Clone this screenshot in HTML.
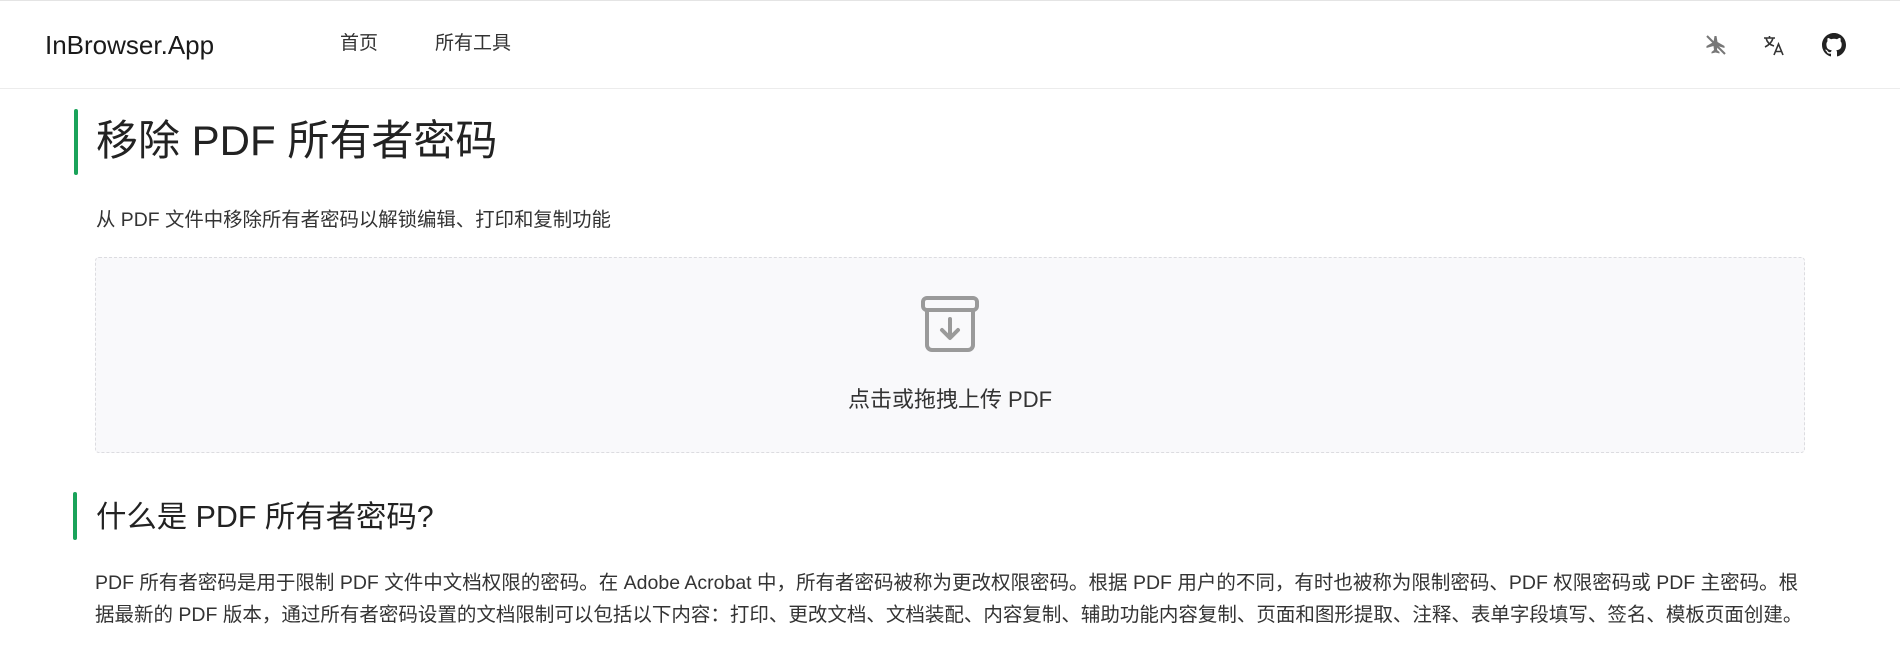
<!DOCTYPE html>
<html><head><meta charset="utf-8"><style>
*{margin:0;padding:0;box-sizing:border-box}
body{width:1900px;height:647px;overflow:hidden;background:#fff;font-family:"Liberation Sans","Noto Sans CJK SC",sans-serif;color:#222;position:relative}
.abs{position:absolute;white-space:nowrap}
</style></head><body>
<div class="abs" style="left:0;top:0;width:1900px;height:1px;background:#e4e4e4"></div>
<div class="abs" style="left:0;top:88px;width:1900px;height:1px;background:#ececec"></div>
<div class="abs" style="left:45px;top:29px;font-size:26px;line-height:32px;color:#1a1a1a">InBrowser.App</div>
<div class="abs" style="left:340px;top:31px;font-size:19px;line-height:26px;color:#333">首页</div>
<div class="abs" style="left:435px;top:31px;font-size:19px;line-height:26px;color:#333">所有工具</div>
<svg class="abs" style="left:1704px;top:33px" width="24" height="24" viewBox="0 0 24 24" fill="#777"><path d="M10.5 3h2l1 6 7 4v2l-7-2-.5 4 2.5 2v1.5l-4-1-4 1V19l2.5-2-.5-4-7 2v-2l7-4z"/><path d="M3 3l18 18" stroke="#777" stroke-width="2"/></svg>
<svg class="abs" style="left:1762px;top:33px" width="24" height="24" viewBox="0 0 24 24" fill="none" stroke="#333" stroke-width="1.6"><path d="M2 5h11M7.5 3v2M4 5c1 4 4 7 8 8M11 5c-1 4-4 7-8 9"/><path d="M12 22l4.5-11 4.5 11M13.5 18.5h6"/></svg>
<svg class="abs" style="left:1822px;top:33px" width="24" height="24" viewBox="0 0 16 16" fill="#222"><path d="M8 0C3.58 0 0 3.58 0 8c0 3.540 2.29 6.53 5.47 7.59.4.07.55-.17.55-.38 0-.19-.01-.82-.01-1.490-2.010.37-2.530-.49-2.69-.94-.09-.23-.48-.94-.82-1.13-.28-.15-.68-.52-.01-.53.63-.01 1.080.58 1.230.82.72 1.210 1.870.87 2.330.66.07-.52.28-.87.51-1.070-1.780-.2-3.640-.89-3.640-3.950 0-.87.31-1.590.82-2.150-.08-.2-.36-1.020.08-2.120 0 0 .67-.21 2.200.82.64-.18 1.320-.27 2-.27.68 0 1.360.09 2 .27 1.530-1.040 2.200-.82 2.200-.82.44 1.100.16 1.920.08 2.120.51.56.82 1.270.82 2.150 0 3.070-1.870 3.750-3.650 3.950.29.25.54.73.54 1.480 0 1.070-.01 1.930-.01 2.200 0 .21.15.46.55.38A8.013 8.013 0 0016 8c0-4.420-3.580-8-8-8z"/></svg>

<div class="abs" style="left:74px;top:109px;width:4px;height:66px;background:#1aa35a;border-radius:2px"></div>
<div class="abs" style="left:96px;top:116px;font-size:42px;line-height:50px;color:#222">移除 PDF 所有者密码</div>
<div class="abs" style="left:96px;top:207px;font-size:19.4px;line-height:26px;color:#333">从 PDF 文件中移除所有者密码以解锁编辑、打印和复制功能</div>

<div class="abs" style="left:95px;top:257px;width:1710px;height:196px;background:#f9f9fb;border:1px dashed #dcdce0;border-radius:4px"></div>
<svg class="abs" style="left:920px;top:296px" width="60" height="57" viewBox="0 0 60 57" fill="none" stroke="#9a9a9a" stroke-width="4" stroke-linecap="round" stroke-linejoin="round"><rect x="3" y="2" width="54" height="12" rx="4"/><path d="M7 14v35a5 5 0 005 5h36a5 5 0 005-5V14"/><path d="M30 23v18M22 34l8 8 8-8"/></svg>
<div class="abs" style="left:0;width:1900px;text-align:center;top:386px;font-size:22px;line-height:28px;color:#333">点击或拖拽上传 PDF</div>

<div class="abs" style="left:73px;top:492px;width:4px;height:48px;background:#1aa35a;border-radius:2px"></div>
<div class="abs" style="left:96px;top:498px;font-size:30.4px;line-height:38px;color:#222">什么是 PDF 所有者密码?</div>
<div class="abs" style="left:95px;top:567px;font-size:19.5px;line-height:32px;color:#333;white-space:nowrap">PDF 所有者密码是用于限制 PDF 文件中文档权限的密码。在 Adobe Acrobat 中，所有者密码被称为更改权限密码。根据 PDF 用户的不同，有时也被称为限制密码、PDF 权限密码或 PDF 主密码。根<br>据最新的 PDF 版本，通过所有者密码设置的文档限制可以包括以下内容：打印、更改文档、文档装配、内容复制、辅助功能内容复制、页面和图形提取、注释、表单字段填写、签名、模板页面创建。</div>
</body></html>
